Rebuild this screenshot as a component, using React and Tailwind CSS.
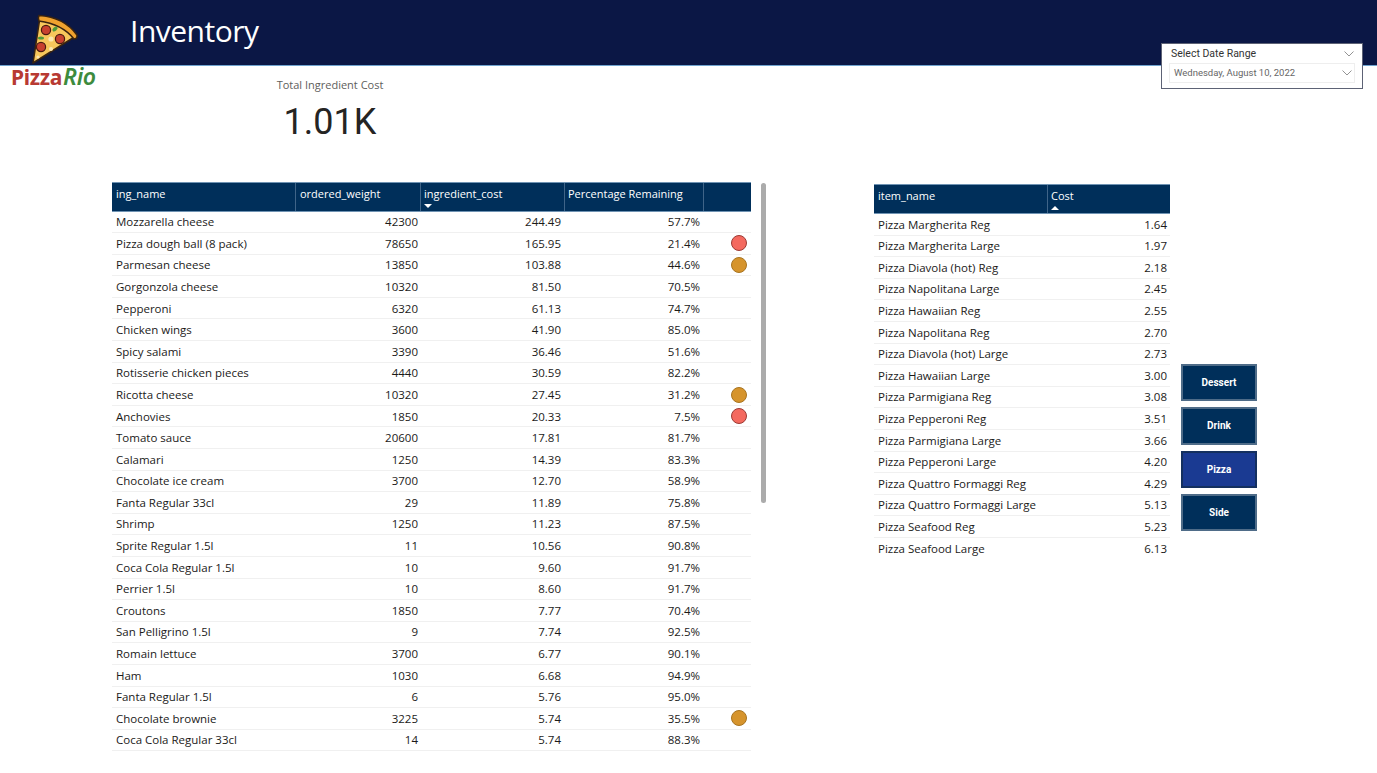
const ingredients = [
  ['Mozzarella cheese', '42300', '244.49', '57.7%', null],
  ['Pizza dough ball (8 pack)', '78650', '165.95', '21.4%', 'red'],
  ['Parmesan cheese', '13850', '103.88', '44.6%', 'amber'],
  ['Gorgonzola cheese', '10320', '81.50', '70.5%', null],
  ['Pepperoni', '6320', '61.13', '74.7%', null],
  ['Chicken wings', '3600', '41.90', '85.0%', null],
  ['Spicy salami', '3390', '36.46', '51.6%', null],
  ['Rotisserie chicken pieces', '4440', '30.59', '82.2%', null],
  ['Ricotta cheese', '10320', '27.45', '31.2%', 'amber'],
  ['Anchovies', '1850', '20.33', '7.5%', 'red'],
  ['Tomato sauce', '20600', '17.81', '81.7%', null],
  ['Calamari', '1250', '14.39', '83.3%', null],
  ['Chocolate ice cream', '3700', '12.70', '58.9%', null],
  ['Fanta Regular 33cl', '29', '11.89', '75.8%', null],
  ['Shrimp', '1250', '11.23', '87.5%', null],
  ['Sprite Regular 1.5l', '11', '10.56', '90.8%', null],
  ['Coca Cola Regular 1.5l', '10', '9.60', '91.7%', null],
  ['Perrier 1.5l', '10', '8.60', '91.7%', null],
  ['Croutons', '1850', '7.77', '70.4%', null],
  ['San Pelligrino 1.5l', '9', '7.74', '92.5%', null],
  ['Romain lettuce', '3700', '6.77', '90.1%', null],
  ['Ham', '1030', '6.68', '94.9%', null],
  ['Fanta Regular 1.5l', '6', '5.76', '95.0%', null],
  ['Chocolate brownie', '3225', '5.74', '35.5%', 'amber'],
  ['Coca Cola Regular 33cl', '14', '5.74', '88.3%', null],
];

const items = [
  ['Pizza Margherita Reg', '1.64'],
  ['Pizza Margherita Large', '1.97'],
  ['Pizza Diavola (hot) Reg', '2.18'],
  ['Pizza Napolitana Large', '2.45'],
  ['Pizza Hawaiian Reg', '2.55'],
  ['Pizza Napolitana Reg', '2.70'],
  ['Pizza Diavola (hot) Large', '2.73'],
  ['Pizza Hawaiian Large', '3.00'],
  ['Pizza Parmigiana Reg', '3.08'],
  ['Pizza Pepperoni Reg', '3.51'],
  ['Pizza Parmigiana Large', '3.66'],
  ['Pizza Pepperoni Large', '4.20'],
  ['Pizza Quattro Formaggi Reg', '4.29'],
  ['Pizza Quattro Formaggi Large', '5.13'],
  ['Pizza Seafood Reg', '5.23'],
  ['Pizza Seafood Large', '6.13'],
];

const categories = ['Dessert', 'Drink', 'Pizza', 'Side'];

function PizzaLogo() {
  return (
    <svg width="50" height="52" viewBox="0 0 50 52" className="absolute left-[29px] top-[14px]">
      <path d="M11 3 Q35 6 47 22 L4 49 Z" fill="#f7c75c" stroke="#3a2410" strokeWidth="1.6" strokeLinejoin="round" />
      <path d="M10 1.5 Q35 3 48 21 Q48.5 25 45 25 Q33 10 10 7 Q8.5 4 10 1.5 Z" fill="#f0a22e" stroke="#3a2410" strokeWidth="1.6" strokeLinejoin="round" />
      <circle cx="17" cy="16" r="4.6" fill="#c8402f" stroke="#4a1a10" strokeWidth="1.2" />
      <circle cx="31" cy="25" r="4.6" fill="#c8402f" stroke="#4a1a10" strokeWidth="1.2" />
      <circle cx="12" cy="33" r="4.6" fill="#c8402f" stroke="#4a1a10" strokeWidth="1.2" />
      <ellipse cx="26" cy="15" rx="3" ry="1.8" fill="#4f9a3a" transform="rotate(-40 26 15)" />
      <ellipse cx="12" cy="24" rx="3" ry="1.6" fill="#4f9a3a" />
      <circle cx="22" cy="25" r="2.6" fill="#fbe7b0" />
      <circle cx="22" cy="35" r="2" fill="#fbe7b0" />
      <circle cx="9" cy="43" r="1.6" fill="#fbe7b0" />
    </svg>
  );
}

function DateSlicer() {
  return (
    <div className="absolute left-[1161px] top-[43px] w-[202px] h-[46px] bg-white border border-[#5d6275] px-[7px] font-['Roboto',sans-serif] text-[10px]">
      <div className="flex items-center justify-between h-[19px] pl-[2px] pr-[1px] text-[#333]">
        <span className="text-[10.5px]">Select Date Range</span>
        <svg width="10" height="6" viewBox="0 0 10 6" fill="none" stroke="#777" strokeWidth="0.8"><path d="M0.5 0.5 L5 5 L9.5 0.5" /></svg>
      </div>
      <div className="flex items-center justify-between h-[20px] border border-[#eeeeee] pl-[4px] pr-[2px] text-[#666] text-[9.5px]">
        <span>Wednesday, August 10, 2022</span>
        <svg width="10" height="6" viewBox="0 0 10 6" fill="none" stroke="#777" strokeWidth="0.8"><path d="M0.5 0.5 L5 5 L9.5 0.5" /></svg>
      </div>
    </div>
  );
}

function SortArrow({ up }) {
  return (
    <svg width="8" height="4" viewBox="0 0 8 4" className="absolute left-[3px] bottom-[3px]">
      <path d={up ? 'M0 4 L4 0 L8 4 Z' : 'M0 0 L4 4 L8 0 Z'} fill="#fff" />
    </svg>
  );
}

function HeadCell({ children, sort, last, tight }) {
  return (
    <div className={`relative h-full pt-[3px] leading-[16px] text-[11px] text-white ${tight ? 'pl-[3px]' : 'pl-[4px]'} ${last ? '' : 'border-r border-[#3f6488]'}`}>
      {children}
      {sort && <SortArrow up={sort === 'up'} />}
    </div>
  );
}

export default function App() {
  return (
    <div className="relative w-[1377px] h-[773px] overflow-hidden bg-white font-['Open_Sans',sans-serif] text-[11.5px] text-[#1b1a19]">
      {/* header band */}
      <header className="h-[66px] bg-[#0b1745] border-b border-[#6fa3cf] pl-[130px] pt-[9px]">
        <h1 className="text-[30px] leading-[44px] text-white tracking-[-0.5px]">Inventory</h1>
      </header>

      <PizzaLogo />
      <div className="absolute left-[11px] top-[63px] text-[21px] leading-[26px] font-bold font-['Noto_Sans',sans-serif] tracking-[-0.3px]">
        <span className="text-[#b83a33]">Pizza</span>
        <span className="text-[#3d8b3d] italic font-semibold text-[23px] ml-[1px]">Rio</span>
      </div>
      <DateSlicer />

      <div className="flex">
        {/* ingredients */}
        <section className="w-[874px] pl-[112px] shrink-0">
          <div className="w-[436px] pt-[11px] flex flex-col items-center">
            <p className="text-[11px] leading-[16px] text-[#605e5c]">Total Ingredient Cost</p>
            <p className="mt-[5px] text-[36px] leading-[48px] text-[#252423] font-['Roboto',sans-serif]">1.01K</p>
          </div>

          <div className="relative mt-[36px] w-[639px]">
            <div className="grid grid-cols-[184px_125px_144px_139px_47px] h-[29.5px] bg-[#002f5a] border-t border-b border-[#6f93b3]">
              <HeadCell>ing_name</HeadCell>
              <HeadCell>ordered_weight</HeadCell>
              <HeadCell sort="down" tight>ingredient_cost</HeadCell>
              <HeadCell tight>Percentage Remaining</HeadCell>
              <HeadCell last />
            </div>
            {ingredients.map((row) => (
              <div key={row[0]} className="grid grid-cols-[184px_125px_144px_139px_47px] h-[21.6px] items-center border-b border-[#f0f0f0]">
                <span className="pl-[4px] whitespace-nowrap">{row[0]}</span>
                <span className="pr-[3px] text-right">{row[1]}</span>
                <span className="pr-[4px] text-right">{row[2]}</span>
                <span className="pr-[4px] text-right">{row[3]}</span>
                <span className="flex justify-center pl-[27px] pr-[4px]">
                  {row[4] === 'red' && <span className="block w-[16px] h-[16px] rounded-full bg-[#f4695f] border border-[#9c3a34]" />}
                  {row[4] === 'amber' && <span className="block w-[16px] h-[16px] rounded-full bg-[#d6942c] border border-[#a87420]" />}
                </span>
              </div>
            ))}
            {/* scroll thumb */}
            <div className="absolute left-[649px] top-[1px] w-[5px] h-[320px] rounded-full bg-[#ababab]" />
          </div>
        </section>

        {/* item cost table + category buttons */}
        <section className="flex items-start pt-[118px]">
          <div className="w-[296px]">
            <div className="grid grid-cols-[174px_122px] h-[30px] bg-[#002f5a] border-t border-b border-[#6f93b3]">
              <HeadCell>item_name</HeadCell>
              <HeadCell sort="up" last tight>Cost</HeadCell>
            </div>
            {items.map((row) => (
              <div key={row[0]} className="grid grid-cols-[174px_122px] h-[21.6px] items-center border-b border-[#f0f0f0] last:border-b-0">
                <span className="pl-[4px] whitespace-nowrap">{row[0]}</span>
                <span className="pr-[3px] text-right">{row[1]}</span>
              </div>
            ))}
          </div>
          <div className="ml-[11px] mt-[180px] flex flex-col gap-[6px] font-['Roboto',sans-serif]">
            {categories.map((c) => (
              <button
                key={c}
                className={`w-[76px] h-[37.3px] border-2 text-[10px] font-bold text-white ${
                  c === 'Pizza' ? 'bg-[#1a3a92] border-[#14305f]' : 'bg-[#002f5a] border-[#4f6c88]'
                }`}
              >
                {c}
              </button>
            ))}
          </div>
        </section>
      </div>
    </div>
  );
}
